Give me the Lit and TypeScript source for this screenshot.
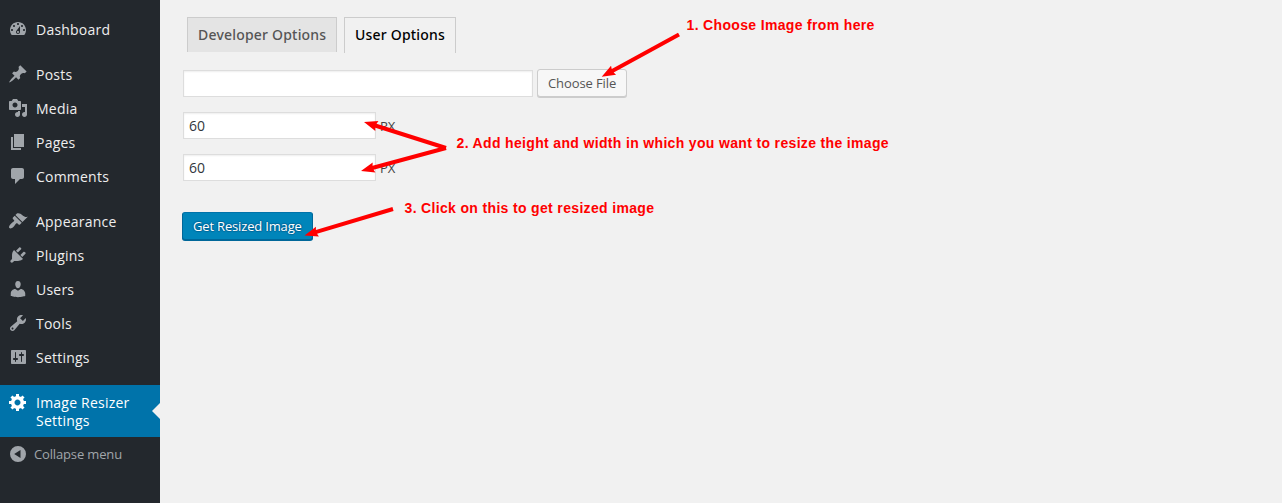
import { LitElement, html, svg, css } from "lit";
import { customElement } from "lit/decorators.js";
import { classMap } from "lit/directives/class-map.js";

interface Entry {
  label: string;
  icon: string;
  gap?: boolean;
  current?: boolean;
}

const entries: Entry[] = [
  { label: "Dashboard", icon: "M3.76 16h12.48c1.1-1.37 1.76-3.11 1.76-5 0-4.42-3.58-8-8-8s-8 3.58-8 8c0 1.89.66 3.63 1.76 5zM10 4c.55 0 1 .45 1 1s-.45 1-1 1-1-.45-1-1 .45-1 1-1zM6 6c.55 0 1 .45 1 1s-.45 1-1 1-1-.45-1-1 .45-1 1-1zm8 0c.55 0 1 .45 1 1s-.45 1-1 1-1-.45-1-1 .45-1 1-1zm-5.37 5.55L12 7v6c0 1.1-.9 2-2 2s-2-.9-2-2c0-.57.24-1.08.63-1.45zM4 10c.55 0 1 .45 1 1s-.45 1-1 1-1-.45-1-1 .45-1 1-1zm12 0c.55 0 1 .45 1 1s-.45 1-1 1-1-.45-1-1 .45-1 1-1zm-5 3c0-.55-.45-1-1-1s-1 .45-1 1 .45 1 1 1 1-.45 1-1z" },
  { label: "Posts", gap: true, icon: "M10.44 3.02l1.82-1.82 6.36 6.35-1.83 1.82c-1.05-.68-2.48-.57-3.41.36l-.75.75c-.92.93-1.04 2.35-.35 3.41l-1.83 1.82-2.41-2.41-2.8 2.79c-.42.42-3.38 2.71-3.8 2.29s1.86-3.39 2.28-3.81l2.79-2.79L4.1 9.36l1.83-1.82c1.05.69 2.48.57 3.4-.36l.75-.75c.93-.92 1.05-2.35.36-3.41z" },
  { label: "Media", icon: "M13 11V4c0-.55-.45-1-1-1h-1.67L9 1H5L3.67 3H2c-.55 0-1 .45-1 1v7c0 .55.45 1 1 1h10c.55 0 1-.45 1-1zM7 4.5c1.38 0 2.5 1.12 2.5 2.5S8.38 9.5 7 9.5 4.5 8.38 4.5 7 5.62 4.5 7 4.5zM14 6h5v10.5c0 1.38-1.12 2.5-2.5 2.5S14 17.88 14 16.5s1.12-2.5 2.5-2.5c.17 0 .34.02.5.05V9h-3V6zm-4 8.05V13h2v3.5c0 1.38-1.12 2.5-2.5 2.5S7 17.88 7 16.5 8.12 14 9.5 14c.17 0 .34.02.5.05z" },
  { label: "Pages", icon: "M6 15V2h10v13H6zm-1 1h8v2H3V5h2v11z" },
  { label: "Comments", icon: "M5 2h9c1.1 0 2 .9 2 2v7c0 1.1-.9 2-2 2h-2l-5 5v-5H5c-1.1 0-2-.9-2-2V4c0-1.1.9-2 2-2z" },
  { label: "Appearance", gap: true, icon: "M14.48 11.06L7.41 3.99l1.5-1.5c.5-.56 2.3-.47 3.51.32 1.21.8 1.43 1.28 2.91 2.1 1.18.64 2.45 1.26 4.45.85zm-.71.71L6.7 4.7 4.93 6.47c-.39.39-.39 1.02 0 1.41l1.06 1.06c.39.39.39 1.03 0 1.42-.6.6-1.43 1.11-2.21 1.69-.35.26-.7.53-1.01.84C1.43 14.23.4 16.08 1.4 17.07c.99 1 2.84-.03 4.18-1.36.31-.31.58-.66.85-1.02.57-.78 1.08-1.61 1.69-2.21.39-.39 1.02-.39 1.41 0l1.06 1.06c.39.39 1.02.39 1.41 0z" },
  { label: "Plugins", icon: "M13.11 4.36L9.87 7.6 8 5.73l3.24-3.24c.35-.34 1.05-.2 1.56.32.52.51.66 1.21.31 1.55zm-8 1.77l.91-1.12 9.01 9.01-1.19.84c-.71.71-2.63 1.16-3.82 1.16H6.14L4.9 17.26c-.59.59-1.54.59-2.12 0-.59-.58-.59-1.53 0-2.12l1.24-1.24v-3.88c0-1.13.4-3.19 1.09-3.89zm7.26 3.97l3.24-3.24c.34-.35 1.04-.21 1.55.31.52.51.66 1.21.31 1.55l-3.24 3.25z" },
  { label: "Users", icon: "M10 9.25c-2.27 0-2.73-3.44-2.73-3.44C7 4.02 7.82 2 9.97 2c2.16 0 2.98 2.02 2.71 3.81 0 0-.41 3.44-2.68 3.44zm0 2.57L12.72 10c2.39 0 4.52 2.33 4.52 4.53v2.49s-3.65 1.13-7.24 1.13c-3.65 0-7.24-1.13-7.24-1.13v-2.49c0-2.25 1.94-4.48 4.47-4.48z" },
  { label: "Tools", icon: "M16.68 9.77c-1.34 1.34-3.3 1.67-4.95.99l-5.41 6.52c-.99.99-2.59.99-3.58 0s-.99-2.59 0-3.57l6.52-5.42c-.68-1.65-.35-3.61.99-4.95 1.28-1.28 3.12-1.62 4.72-1.06l-2.89 2.89 2.82 2.82 2.86-2.87c.53 1.58.18 3.39-1.08 4.65zM3.81 16.21c.4.39 1.04.39 1.43 0 .4-.4.4-1.04 0-1.43-.39-.4-1.03-.4-1.43 0-.39.39-.39 1.03 0 1.43z" },
  { label: "Settings", icon: "M18 16V4c0-.55-.45-1-1-1H4c-.55 0-1 .45-1 1v12c0 .55.45 1 1 1h13c.55 0 1-.45 1-1zM8 11h1c.55 0 1 .45 1 1s-.45 1-1 1H8v1.5c0 .28-.22.5-.5.5s-.5-.22-.5-.5V13H6c-.55 0-1-.45-1-1s.45-1 1-1h1V5.5c0-.28.22-.5.5-.5s.5.22.5.5V11zm5-2h-1c-.55 0-1-.45-1-1s.45-1 1-1h1V5.5c0-.28.22-.5.5-.5s.5.22.5.5V7h1c.55 0 1 .45 1 1s-.45 1-1 1h-1v5.5c0 .28-.22.5-.5.5s-.5-.22-.5-.5V9z" },
  { label: "Image Resizer Settings", gap: true, current: true, icon: "M18 12h-2.18c-.17.7-.44 1.35-.81 1.93l1.54 1.54-2.1 2.1-1.54-1.54c-.58.36-1.23.63-1.91.79V19H8v-2.18c-.68-.16-1.33-.43-1.91-.79l-1.54 1.54-2.12-2.12 1.54-1.54c-.36-.58-.63-1.23-.79-1.91H1V9.03h2.17c.16-.7.44-1.35.8-1.94L2.43 5.55l2.1-2.1 1.54 1.54c.58-.37 1.24-.64 1.93-.81V2h3v2.18c.68.16 1.33.43 1.91.79l1.54-1.54 2.12 2.12-1.54 1.54c.36.59.64 1.24.8 1.94H18V12zm-8.5 1.5c1.66 0 3-1.34 3-3s-1.34-3-3-3-3 1.34-3 3 1.34 3 3 3z" },
];

@customElement("admin-menu")
class AdminMenu extends LitElement {
  static styles = css`
    :host {
      display: block;
      box-sizing: border-box;
      width: 160px;
      padding-top: 12px;
      background: #23282d;
      font: 14px/18px "Open Sans", sans-serif;
      letter-spacing: 0.22px;
      color: #eee;
    }
    .item {
      display: flex;
      position: relative;
    }
    .gap {
      margin-top: 11px;
    }
    .icon {
      flex: none;
      width: 20px;
      height: 20px;
      padding: 7px 8px;
      fill: #a0a5aa;
    }
    .label {
      padding: 9px 8px 7px 0;
    }
    .current {
      background: #0073aa;
      color: #fff;
    }
    .current .icon {
      fill: #fff;
    }
    .current::after {
      content: "";
      position: absolute;
      right: 0;
      top: 18px;
      border: 8px solid transparent;
      border-right-color: #f1f1f1;
      border-left-width: 0;
    }
    .collapse {
      font-size: 13px;
      letter-spacing: -0.15px;
      color: #a0a5aa;
    }
    .collapse .label {
      margin-left: -2px;
      padding-top: 8px;
    }
  `;

  render() {
    return html`
      ${entries.map(
        (e) => html`<div class=${classMap({ item: true, gap: !!e.gap, current: !!e.current })}>
          <svg class="icon" viewBox="0 0 20 20"><path fill-rule="evenodd" d=${e.icon} /></svg>
          <span class="label">${e.label}</span>
        </div>`
      )}
      <div class="item collapse">
        <svg class="icon" viewBox="0 0 20 20">
          <path fill-rule="evenodd" d="M10 2a8 8 0 1 1 0 16a8 8 0 0 1 0-16zM12.5 6L6.2 10L12.5 14z" />
        </svg>
        <span class="label">Collapse menu</span>
      </div>
    `;
  }
}

const arrows = [
  [679, 34.5, 601.7, 76.7],
  [446, 148, 364, 122],
  [446, 148, 361, 171],
  [393, 209, 304.5, 235.5],
];

function arrow([x1, y1, x2, y2]: number[]) {
  const len = Math.hypot(x2 - x1, y2 - y1);
  const ux = (x2 - x1) / len;
  const uy = (y2 - y1) / len;
  const at = (back: number, side: number) =>
    `${x2 - ux * back - uy * side},${y2 - uy * back + ux * side}`;
  const points = [
    at(len, 2), at(12.5, 2), at(13.5, 5.2), at(0, 0), at(13.5, -5.2), at(12.5, -2), at(len, -2),
  ];
  return svg`<polygon points=${points.join(" ")} />`;
}

@customElement("app-root")
class AppRoot extends LitElement {
  static styles = css`
    :host {
      display: flex;
      position: relative;
      height: 503px;
      overflow: hidden;
      background: #f1f1f1;
      font: 13px/18px "Open Sans", sans-serif;
      color: #444;
    }
    admin-menu {
      flex: none;
    }
    .content {
      flex: 1;
      padding: 17px 0 0 22px;
    }
    .tabs {
      display: flex;
      gap: 7px;
      align-items: flex-start;
      padding-left: 5px;
      height: 53px;
    }
    .tab {
      box-sizing: border-box;
      width: 150px;
      height: 35px;
      border: 1px solid #ccc;
      border-bottom: 0;
      background: #e4e4e4;
      padding: 5px 0 0 10px;
      font: 500 14px/24px "Noto Sans", "Open Sans", sans-serif;
      letter-spacing: 0.2px;
      white-space: nowrap;
      color: #555;
    }
    .active {
      width: 112px;
      height: 36px;
      background: #f1f1f1;
      color: #000;
    }
    .row {
      display: flex;
      align-items: center;
      gap: 4px;
      height: 27px;
      margin: 0 0 15px 1px;
    }
    .field {
      box-sizing: border-box;
      width: 193px;
      height: 27px;
      border: 1px solid #ddd;
      background: #fff;
      box-shadow: inset 0 1px 2px rgba(0, 0, 0, 0.07);
      padding: 4px 5px;
      font-size: 14px;
      line-height: 18px;
      color: #32373c;
    }
    .wide {
      width: 350px;
    }
    .button {
      box-sizing: border-box;
      width: 90px;
      height: 28px;
      padding: 0 0 0 10px;
      border: 1px solid #ccc;
      border-radius: 3px;
      background: #f7f7f7;
      box-shadow: 0 1px 0 #ccc;
      font: 13px/26px "Open Sans", sans-serif;
      letter-spacing: -0.1px;
      text-align: left;
      white-space: nowrap;
      color: #555;
    }
    .row .button {
      align-self: flex-start;
      margin-top: -1px;
    }
    .primary {
      width: 131px;
      margin-top: 16px;
      background: #0085ba;
      border-color: #0073aa #006799 #006799;
      box-shadow: 0 1px 0 #006799;
      letter-spacing: -0.17px;
      color: #fff;
      text-shadow: 0 -1px 1px #006799, 1px 0 1px #006799, 0 1px 1px #006799, -1px 0 1px #006799;
    }
    .notes {
      position: absolute;
      left: 0;
      top: 0;
      fill: #f00;
      font: bold 14px "Liberation Sans", sans-serif;
      letter-spacing: 0.34px;
    }
  `;

  render() {
    return html`
      <admin-menu></admin-menu>
      <main class="content">
        <div class="tabs">
          <div class="tab">Developer Options</div>
          <div class="tab active">User Options</div>
        </div>
        <div class="row">
          <div class="field wide"></div>
          <button class="button">Choose File</button>
        </div>
        <div class="row"><div class="field">60</div>PX</div>
        <div class="row"><div class="field">60</div>PX</div>
        <button class="button primary">Get Resized Image</button>
      </main>
      <svg class="notes" width="1282" height="503">
        ${arrows.map(arrow)}
        <text x="686.5" y="30">1. Choose Image from here</text>
        <text x="456.5" y="148">2. Add height and width in which you want to resize the image</text>
        <text x="404.5" y="213">3. Click on this to get resized image</text>
      </svg>
    `;
  }
}
